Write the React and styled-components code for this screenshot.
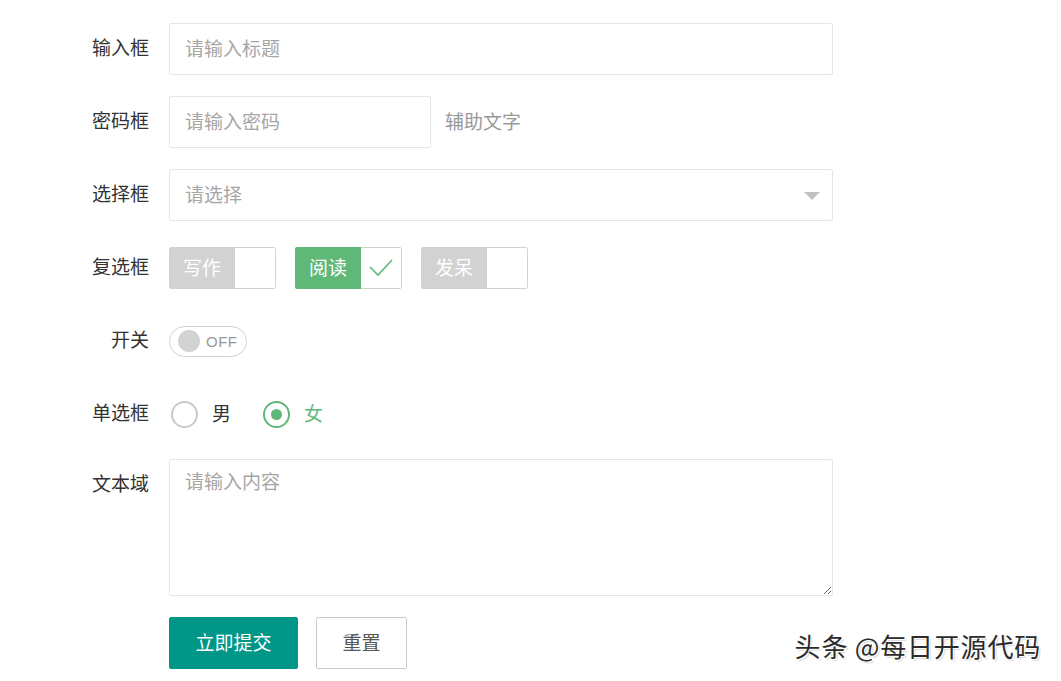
import React from "react";
import styled, { createGlobalStyle } from "styled-components";

const GlobalStyle = createGlobalStyle`
  html, body {
    margin: 0;
    background: #fff;
    font-family: "Noto Sans CJK SC", "Liberation Sans", sans-serif;
  }
`;

const Page = styled.div`
  width: 1061px;
  height: 681px;
  padding-top: 23px;
  box-sizing: border-box;
  overflow: hidden;
  position: relative;
`;

const Row = styled.div`
  display: flex;
  align-items: ${(p) => (p.$top ? "flex-start" : "center")};
  height: ${(p) => (p.$top ? "auto" : "52px")};
  margin-bottom: ${(p) => p.$mb ?? 21}px;
`;

const Label = styled.label`
  width: 169px;
  height: 52px;
  padding: 0 20px 4px 0;
  box-sizing: border-box;
  text-align: right;
  line-height: 48px;
  font-size: 19px;
  color: #333;
  flex-shrink: 0;
  align-self: flex-start;
`;

const Input = styled.input`
  width: ${(p) => p.$w || 664}px;
  height: 52px;
  box-sizing: border-box;
  border: 1px solid #e6e6e6;
  border-radius: 2px;
  padding: 0 15px 4px;
  font-size: 19px;
  font-family: inherit;
  color: #333;
  outline: none;
  &::placeholder {
    color: #a6a6a6;
  }
`;

const AuxText = styled.span`
  margin-left: 14px;
  padding-bottom: 4px;
  font-size: 19px;
  color: #999;
`;

const SelectBox = styled.div`
  width: 664px;
  height: 52px;
  box-sizing: border-box;
  border: 1px solid #e6e6e6;
  border-radius: 2px;
  padding: 0 12px 0 15px;
  display: flex;
  align-items: center;
  justify-content: space-between;
  font-size: 19px;
  color: #a6a6a6;
`;

const SelectText = styled.span`
  padding-bottom: 4px;
`;

const Caret = styled.span`
  width: 0;
  height: 0;
  border-left: 8px solid transparent;
  border-right: 8px solid transparent;
  border-top: 8px solid #c2c2c2;
  margin-top: 1px;
`;

const CheckGroup = styled.div`
  display: flex;
  gap: 19px;
`;

const Check = styled.div`
  display: flex;
  height: 42px;
  box-sizing: border-box;
  border-radius: 2px;
  overflow: hidden;
`;

const CheckText = styled.span`
  width: 66px;
  padding-bottom: 4px;
  box-sizing: border-box;
  display: flex;
  align-items: center;
  justify-content: center;
  background: ${(p) => (p.$on ? "#5fb878" : "#d2d2d2")};
  color: #fff;
  font-size: 19px;
`;

const CheckIcon = styled.span`
  width: 41px;
  box-sizing: border-box;
  border: 1px solid #d2d2d2;
  border-left: none;
  border-radius: 0 2px 2px 0;
  display: flex;
  align-items: center;
  justify-content: center;
`;

const Switch = styled.div`
  width: 78px;
  height: 31px;
  box-sizing: border-box;
  border: 1px solid #d2d2d2;
  border-radius: 16px;
  display: flex;
  align-items: center;
  padding-left: 8px;
  gap: 6px;
`;

const Knob = styled.span`
  width: 22px;
  height: 22px;
  border-radius: 50%;
  background: #d2d2d2;
`;

const SwitchText = styled.span`
  font-family: "Liberation Sans", Arial, sans-serif;
  font-size: 15px;
  color: #999;
  letter-spacing: 0.5px;
`;

const RadioGroup = styled.div`
  display: flex;
  align-items: center;
  gap: 32px;
  padding-left: 2px;
`;

const Radio = styled.div`
  display: flex;
  align-items: center;
  gap: 14px;
  font-size: 19px;
  color: ${(p) => (p.$on ? "#5fb878" : "#333")};
`;

const RadioLabel = styled.span`
  padding-bottom: 3px;
`;

const RadioCircle = styled.span`
  width: 27px;
  height: 27px;
  box-sizing: border-box;
  border-radius: 50%;
  border: 2px solid ${(p) => (p.$on ? "#5fb878" : "#c9c9c9")};
  display: flex;
  align-items: center;
  justify-content: center;
  &::after {
    content: "";
    display: ${(p) => (p.$on ? "block" : "none")};
    width: 11px;
    height: 11px;
    border-radius: 50%;
    background: #5fb878;
  }
`;

const TextArea = styled.textarea`
  width: 664px;
  height: 137px;
  box-sizing: border-box;
  border: 1px solid #e6e6e6;
  border-radius: 2px;
  padding: 8px 15px;
  font-size: 19px;
  line-height: 26px;
  font-family: inherit;
  resize: both;
  outline: none;
  display: block;
  &::placeholder {
    color: #a6a6a6;
  }
`;

const Buttons = styled.div`
  display: flex;
  gap: 18px;
  padding-left: 169px;
`;

const Button = styled.button`
  width: ${(p) => (p.$primary ? 129 : 91)}px;
  height: 52px;
  padding: 0 0 4px;
  box-sizing: border-box;
  border-radius: 2px;
  border: 1px solid ${(p) => (p.$primary ? "#009688" : "#c9c9c9")};
  background: ${(p) => (p.$primary ? "#009688" : "#fff")};
  color: ${(p) => (p.$primary ? "#fff" : "#555")};
  font-size: 19px;
  font-family: inherit;
  cursor: pointer;
`;

const Watermark = styled.div`
  position: absolute;
  right: 20px;
  bottom: 17px;
  font-size: 26px;
  font-weight: 400;
  color: #2b2b2b;
  text-shadow: 1px 1px 0 #fff, -1px -1px 0 #fff, 2px 2px 1px rgba(0, 0, 0, 0.15);
  letter-spacing: 0.8px;
`;

function CheckMark() {
  return (
    <svg width="26" height="20" viewBox="0 0 26 20">
      <path d="M2 9 L10 17 L24 2" fill="none" stroke="#5fb878" strokeWidth="1.6" />
    </svg>
  );
}

export default function App() {
  return (
    <Page>
      <GlobalStyle />
      <Row>
        <Label>输入框</Label>
        <Input placeholder="请输入标题" />
      </Row>
      <Row>
        <Label>密码框</Label>
        <Input type="password" $w={262} placeholder="请输入密码" />
        <AuxText>辅助文字</AuxText>
      </Row>
      <Row>
        <Label>选择框</Label>
        <SelectBox>
          <SelectText>请选择</SelectText>
          <Caret />
        </SelectBox>
      </Row>
      <Row>
        <Label>复选框</Label>
        <CheckGroup>
          <Check>
            <CheckText>写作</CheckText>
            <CheckIcon />
          </Check>
          <Check>
            <CheckText $on>阅读</CheckText>
            <CheckIcon>
              <CheckMark />
            </CheckIcon>
          </Check>
          <Check>
            <CheckText>发呆</CheckText>
            <CheckIcon />
          </Check>
        </CheckGroup>
      </Row>
      <Row>
        <Label>开关</Label>
        <Switch>
          <Knob />
          <SwitchText>OFF</SwitchText>
        </Switch>
      </Row>
      <Row $mb={19}>
        <Label>单选框</Label>
        <RadioGroup>
          <Radio>
            <RadioCircle />
            <RadioLabel>男</RadioLabel>
          </Radio>
          <Radio $on>
            <RadioCircle $on />
            <RadioLabel>女</RadioLabel>
          </Radio>
        </RadioGroup>
      </Row>
      <Row $top>
        <Label>文本域</Label>
        <TextArea placeholder="请输入内容" />
      </Row>
      <Buttons>
        <Button $primary>立即提交</Button>
        <Button>重置</Button>
      </Buttons>
      <Watermark>头条 @每日开源代码</Watermark>
    </Page>
  );
}
